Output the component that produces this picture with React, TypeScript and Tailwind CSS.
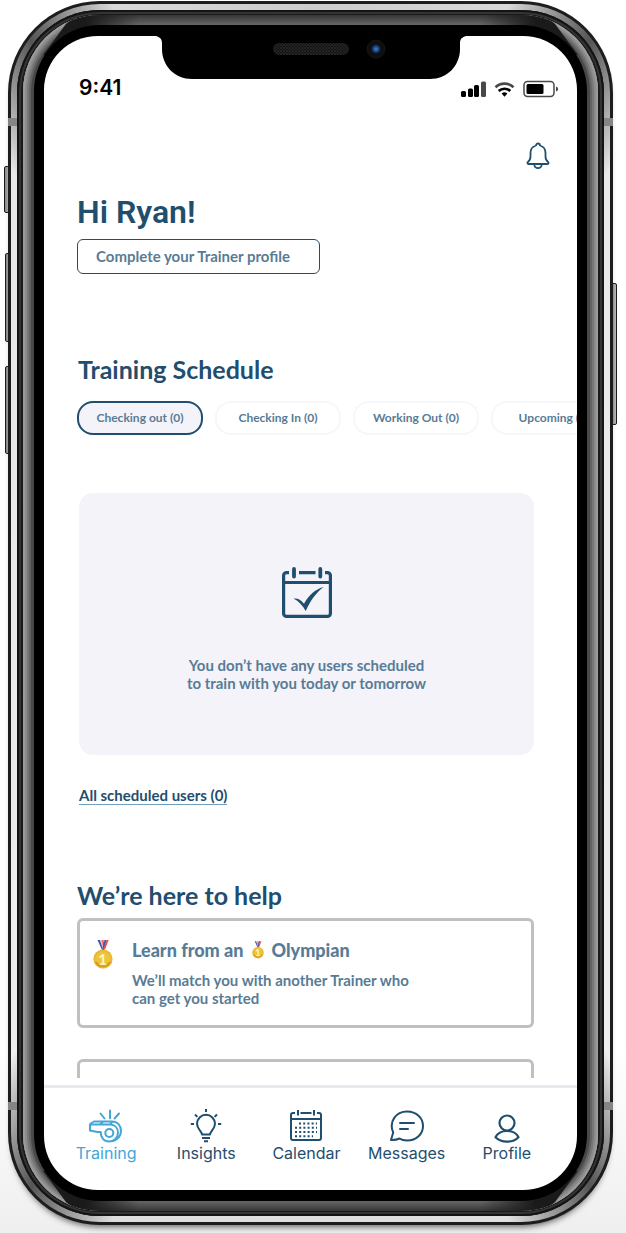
import React from "react";

function StatusIcons() {
  return (
    <svg width="100" height="20" viewBox="0 0 100 20" aria-hidden="true">
      <g fill="#000">
        <rect x="1" y="12" width="5" height="6" rx="1.5" />
        <rect x="8" y="9.500" width="5" height="8.500" rx="1.500" />
        <rect x="14" y="6" width="5" height="12" rx="1.500" />
        <rect x="21" y="2.500" width="5" height="15.500" rx="1.500" fill="#484848" />
      </g>
      <g fill="none" strokeWidth="2.600">
        <path d="M35.500 8.200a13 13 0 0 1 18 0" stroke="#484848" />
        <path d="M38.700 12a8.500 8.500 0 0 1 11.600 0" stroke="#000" />
      </g>
      <path d="M41.600 14.600a4.200 4.200 0 0 1 5.800 0l-2.900 3.200z" fill="#000" />
      <rect x="64" y="2.500" width="30" height="15" rx="3.500" fill="#fff" stroke="#484848" strokeWidth="1.500" />
      <rect x="66.500" y="5" width="17" height="10" rx="1.500" fill="#000" />
      <path d="M96 7.500c1.600.4 2 1.200 2 2.500s-.4 2.100-2 2.500z" fill="#484848" />
    </svg>
  );
}

function Notch() {
  return (
    <svg
      className="absolute left-1/2 top-0 -translate-x-1/2"
      width="312"
      height="44"
      viewBox="0 0 312 44"
      aria-hidden="true"
    >
      <path d="M0 0H312C309 0 305 2 305 7V13C305 30 292 43 275 43H37C20 43 7 30 7 13V7C7 2 3 0 0 0Z" fill="#000" />
      <defs>
        <pattern id="mesh" width="3" height="3" patternUnits="userSpaceOnUse">
          <rect width="3" height="3" fill="#141414" />
          <path d="M0 0L3 3M3 0L0 3" stroke="#2a2a2a" strokeWidth=".7" />
        </pattern>
        <radialGradient id="lens">
          <stop offset="0" stopColor="#3b86cf" />
          <stop offset=".6" stopColor="#17406f" />
          <stop offset="1" stopColor="#080d1c" />
        </radialGradient>
      </defs>
      <rect x="118" y="7" width="76" height="12" rx="6" fill="url(#mesh)" />
      <circle cx="221" cy="13" r="9" fill="#0e0e10" stroke="#17171a" />
      <circle cx="221" cy="13" r="5" fill="url(#lens)" />
    </svg>
  );
}

function Bell() {
  return (
    <svg width="24" height="28" viewBox="0 0 24 28" fill="none" stroke="currentColor" strokeWidth="1.800" strokeLinejoin="round" aria-hidden="true">
      <path d="M10 3.500a2 2 0 0 1 4 0c3.600 1 5.500 3.600 5.500 7.500v3.500c0 2.800.8 4.200 2.600 5.500.8.700.5 2-.6 2H2.500c-1.100 0-1.400-1.300-.6-2 1.800-1.300 2.600-2.700 2.600-5.500V11c0-3.900 1.900-6.500 5.500-7.500Z" />
      <path d="M8.300 22.500a3.700 3.700 0 0 0 7.400 0" />
    </svg>
  );
}

function CalendarCheck() {
  return (
    <svg width="50" height="51" viewBox="0 0 50 51" fill="none" stroke="#1f4e6e" strokeWidth="3.200" aria-hidden="true">
      <path d="M7 5.600H4.600a3 3 0 0 0-3 3v37.800a3 3 0 0 0 3 3h40.800a3 3 0 0 0 3-3V8.600a3 3 0 0 0-3-3H43M17 5.600h16.500M2 15.500h46" />
      <path d="M12 2v7.500M38.300 2v7.500" strokeWidth="3.800" strokeLinecap="round" />
      <path d="M11.500 31.500c4-.6 7.500 1.300 10.500 5.200C27 28 33 22.500 41.500 20 34 26 28.500 33.500 23.700 44 20.500 38.500 16.800 34 11.500 31.500Z" fill="#1f4e6e" stroke="none" />
    </svg>
  );
}

function Medal({ className }: { className: string }) {
  return (
    <svg className={className} viewBox="0 0 20 29" aria-hidden="true">
      <path d="M4.500 0H7l4 10H9z" fill="#4355a4" />
      <path d="M7 0h2l2.500 9-1.500 1z" fill="#e9b9c4" />
      <path d="M9 0h1.500l1 7-1 2z" fill="#dc4558" />
      <path d="M11.500 0h2L11 10H9z" fill="#4355a4" />
      <path d="M13.500 0h2.200L12 9.500h-2z" fill="#e64f57" />
      <circle cx="10" cy="19" r="9.600" fill="#e9b62d" />
      <circle cx="10" cy="19" r="7.800" fill="#edc43d" />
      <path d="M3 22A8 8 0 0 0 17 22" fill="none" stroke="#d99b22" strokeWidth="2" />
      <text x="9.700" y="24.500" textAnchor="middle" fontFamily="Lato, sans-serif" fontSize="15" fontWeight="900" fill="#fff3b5">1</text>
    </svg>
  );
}

const iconProps = {
  fill: "none",
  stroke: "currentColor",
  strokeWidth: 2,
  strokeLinejoin: "round" as const,
  "aria-hidden": true,
};

function WhistleIcon() {
  return (
    <svg width="36" height="34" viewBox="0 0 36 34" {...iconProps}>
      <path d="M12.500 4.500l4 5M22 1.500v7.800M31 4.500l-4.500 5" strokeLinecap="round" />
      <path d="M2 15 6 12.500h18c5.500 0 9 4 9 9.300 0 5-3.500 9-9 10.500" />
      <path d="M2 15.500h20c5 0 8 3.400 8 8.300 0 5-4 8.700-9 8.700-5 0-8.500-3.800-8.300-9.500H9.500L2 21.500zM15 12.500l-3 3M24.500 12.500l-2.500 3" />
      <circle cx="21.300" cy="24" r="4" />
    </svg>
  );
}

function BulbIcon() {
  return (
    <svg width="32" height="34" viewBox="0 0 32 34" {...iconProps}>
      <path d="M12 25.500c0-3-5-5.500-5-10.700a9 9 0 0 1 18 0c0 5.200-5 7.700-5 10.700zM12 29h8M14 32.300h4" />
      <path d="M16 0v3M5 5.500l2.400 2.400M27 5.500l-2.400 2.400M.8 15H4M28 15h3.200" />
    </svg>
  );
}

function CalendarIcon() {
  return (
    <svg width="32" height="34" viewBox="0 0 32 34" {...iconProps}>
      <path d="M5 4H3a2 2 0 0 0-2 2v23a2 2 0 0 0 2 2h26a2 2 0 0 0 2-2V6a2 2 0 0 0-2-2h-2M10.500 4h11M1 10h30M8 1v5.500M24 1v5.500" />
      <path d="M9 14.500h18M5 18.800h22M5 23h22M5 27.200h18" strokeDasharray="2 2.200" />
    </svg>
  );
}

function MessageIcon() {
  return (
    <svg width="36" height="34" viewBox="0 0 36 34" {...iconProps}>
      <path d="M2 31 4.200 23.500C-.5 12.500 7 2.500 18 2.500c9.500 0 16 6.500 16 14.500S27.500 31.500 18 31.500c-3 0-5.500-.6-7.500-2-2.500 1.300-5 1.700-8.500 1.500Z" />
      <path d="M11 14h14M11 20h8" strokeLinecap="round" />
    </svg>
  );
}

function ProfileIcon() {
  return (
    <svg width="28" height="34" viewBox="0 0 28 34" {...iconProps} strokeWidth={2.2}>
      <circle cx="14" cy="14" r="7.500" />
      <path d="M2.500 28.300c2-4.300 6-6.300 11.500-6.300s9.500 2 11.500 6.300c-3 3-7 4.400-11.500 4.400s-8.500-1.400-11.500-4.400Z" />
    </svg>
  );
}

const tabs = [
  { label: "Checking out (0)", active: true },
  { label: "Checking In (0)", active: false },
  { label: "Working Out (0)", active: false },
  { label: "Upcoming (0)", active: false },
];

const navItems = [
  { label: "Training", icon: WhistleIcon, active: true },
  { label: "Insights", icon: BulbIcon, active: false },
  { label: "Calendar", icon: CalendarIcon, active: false },
  { label: "Messages", icon: MessageIcon, active: false },
  { label: "Profile", icon: ProfileIcon, active: false },
];

function Screen() {
  return (
    <div className="relative overflow-hidden rounded-[54px] bg-white font-['Lato',sans-serif] text-[#1f4e6e]">
      <Notch />
      <header className="flex h-[67px] items-end justify-between pl-[35px] pr-[17px]">
        <span className="font-['Inter',sans-serif] text-[21px] font-semibold leading-[30px] text-black">9:41</span>
        <span className="mb-1">
          <StatusIcons />
        </span>
      </header>
      <main className="pl-[33px]">
        <div className="flex justify-end pr-[27px] pt-[39px]">
          <button type="button" aria-label="Notifications">
            <Bell />
          </button>
        </div>
        <h1 className="mt-[22px] font-['Roboto',sans-serif] text-[32px] font-semibold leading-10">Hi Ryan!</h1>
        <button
          type="button"
          className="mt-[7px] flex h-[35px] w-[243px] items-center rounded-md border-[1.5px] border-[#1f4e6e] pl-[18px] text-[15px] font-bold text-[#587c95]"
        >
          Complete your Trainer profile
        </button>

        <h2 className="mt-[79px] pl-px text-[25px] font-bold leading-8">Training Schedule</h2>
        <div className="mt-4 flex gap-3 overflow-hidden">
          {tabs.map((tab) => (
            <button
              key={tab.label}
              type="button"
              className={
                tab.active
                  ? "h-[34px] w-[126px] shrink-0 rounded-2xl border-2 border-[#1f4e6e] bg-[#f4f3f9] text-xs font-bold text-[#587c95]"
                  : "h-[34px] w-[126px] shrink-0 rounded-2xl border-2 border-[#f7f6fa] bg-white text-xs font-bold text-[#587c95]"
              }
            >
              {tab.label}
            </button>
          ))}
        </div>

        <section className="ml-0.5 mr-[43px] mt-[58px] flex h-[262px] flex-col items-center rounded-[14px] bg-[#f4f3f9] pt-[74px]">
          <CalendarCheck />
          <p className="mt-[38px] text-center text-[15px] font-bold leading-[18px] text-[#587c95]">
            You don’t have any users scheduled
            <br />
            to train with you today or tomorrow
          </p>
        </section>

        <a href="#scheduled" className="ml-0.5 mt-[31px] inline-block border-b border-[#6fa0b5] text-[15px] font-bold leading-[18px]">
          All scheduled users (0)
        </a>

        <h2 className="mt-[72px] text-[25px] font-bold leading-8">We’re here to help</h2>
        <div className="mr-[43px] mt-[7px]">
          <a href="#olympian" className="flex h-[110px] gap-[19px] rounded-md border-[3px] border-[#c0c0c0] pl-[13px] pt-[19px] text-[#587c95]">
            <Medal className="h-[29px] w-5" />
            <div>
              <h3 className="flex items-center gap-2 text-lg font-black leading-5">
                Learn from an
                <Medal className="h-[18px] w-3" />
                Olympian
              </h3>
              <p className="mt-[11px] text-[15px] font-bold leading-[18px]">
                We’ll match you with another Trainer who
                <br />
                can get you started
              </p>
            </div>
          </a>
          <div className="mt-[31px] h-[19px] rounded-t-md border-x-[3px] border-t-[3px] border-[#c0c0c0]" />
        </div>
      </main>
      <nav className="mt-[7px] grid h-[105px] grid-cols-5 border-t-[3px] border-[#eae9f0] pl-3 pr-5 pt-[21px]">
        {navItems.map(({ label, icon: Icon, active }) => (
          <a
            key={label}
            href={"#" + label.toLowerCase()}
            className={
              active
                ? "flex flex-col items-center font-['Inter',sans-serif] text-base leading-5 text-[#45a6d5]"
                : "flex flex-col items-center font-['Inter',sans-serif] text-base leading-5"
            }
          >
            <Icon />
            {label}
          </a>
        ))}
      </nav>
    </div>
  );
}

const sideButton = "absolute w-[6px] rounded-[2px] border border-[#1b1b1b] bg-linear-to-r from-[#888] to-[#bbb]";

export default function App() {
  return (
    <div className="min-h-screen bg-linear-to-b from-white from-85% to-[#efefef] pb-[7px] pl-2 pr-[13px] pt-px">
      <div className="relative">
        <span className={sideButton + " -left-1 top-[165px] h-[47px]"} />
        <span className={sideButton + " -left-[3px] top-[252px] h-[89px]"} />
        <span className={sideButton + " -left-[3px] top-[365px] h-[88px]"} />
        <span className={sideButton + " -right-1 top-[282px] h-[142px]"} />
        <div className="relative rounded-[92px] bg-[#1d1d1d] p-[3px] shadow-[0_6px_6px_-4px_#666]">
          <div className="rounded-[89px] bg-[conic-gradient(from_0deg,#ccc_0deg,#d8d8d8_18deg,#555_26deg,#e8e8e8_34deg,#eee_146deg,#555_154deg,#e0e0e0_162deg,#ddd_198deg,#555_206deg,#eee_214deg,#e8e8e8_326deg,#555_334deg,#d8d8d8_342deg,#ccc_360deg)] p-[6px]">
            <div className="rounded-[83px] bg-[#1a1a1a] px-[6px] py-[5px] shadow-[inset_0_0_0_2px_#141414,inset_0_0_0_4px_#343434]">
              <div className="relative overflow-hidden rounded-[77px] px-[11px] py-[10px] shadow-[inset_0_0_0_2px_#9b9b9b,inset_0_0_0_4px_#8b8b8b,inset_0_0_0_6px_#777,inset_0_0_0_8px_#626262,inset_0_0_0_30px_#484848]">
                <div className="absolute inset-x-5 top-0 h-10 bg-[linear-gradient(90deg,#1a1a1a_0%,#1a1a1a_8%,transparent_18%,transparent_82%,#1a1a1a_92%,#1a1a1a_100%),linear-gradient(180deg,#363636_0%,#666_25%)] [clip-path:polygon(34px_0,calc(100%_-_34px)_0,calc(100%_-_23px)_9px,100%_100%,0_100%,23px_9px)]" />
                <div className="absolute inset-x-5 bottom-0 h-10 bg-[linear-gradient(90deg,#1a1a1a_0%,#1a1a1a_8%,transparent_18%,transparent_82%,#1a1a1a_92%,#1a1a1a_100%),linear-gradient(0deg,#363636_0%,#666_25%)] [clip-path:polygon(0_0,100%_0,calc(100%_-_23px)_31px,calc(100%_-_34px)_100%,34px_100%,23px_31px)]" />
                <div className="relative rounded-[66px] bg-black px-[10px] pb-[11px] pt-[11px]">
                  <Screen />
                </div>
              </div>
            </div>
          </div>
        </div>
        <span className="absolute left-0 top-[117px] h-2 w-[9px] bg-[#858585]" />
        <span className="absolute right-0 top-[117px] h-2 w-[9px] bg-[#858585]" />
        <span className="absolute bottom-[115px] left-0 h-2 w-[9px] bg-[#858585]" />
        <span className="absolute bottom-[115px] right-0 h-2 w-[9px] bg-[#858585]" />
      </div>
    </div>
  );
}
